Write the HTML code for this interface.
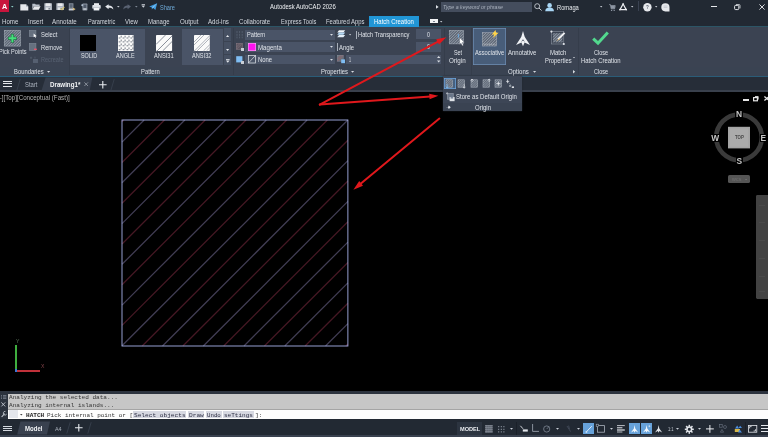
<!DOCTYPE html>
<html lang="en"><head><meta charset="utf-8"><title>Autodesk AutoCAD 2026 - Drawing1</title>
<style>
html,body{margin:0;padding:0;background:#000;}
#wrap{position:relative;width:768px;height:437px;overflow:hidden;background:#000;}
#blur{position:absolute;left:-8px;top:-8px;width:784px;height:453px;filter:blur(0.45px);}
#app{position:absolute;left:8px;top:8px;width:768px;height:437px;font-family:'Liberation Sans',sans-serif;}
#app>div,#app>span,#app>svg{position:absolute;display:block;}
#app>span{white-space:pre;}
#app>svg{overflow:visible;}
</style></head><body><div id="wrap"><div id="blur"><div id="app">
<div style="left:-8.00px;top:-8.00px;width:784.00px;height:453.00px;background:#222933;"></div>
<div style="left:-8.00px;top:26.00px;width:784.00px;height:419.00px;background:#2c5566;"></div>
<div style="left:-8.00px;top:27.00px;width:784.00px;height:418.00px;background:#3b4352;"></div>
<div style="left:-8.00px;top:66.50px;width:784.00px;height:378.50px;background:#3a4352;"></div>
<div style="left:-8.00px;top:75.50px;width:784.00px;height:369.50px;background:#2a5c78;"></div>
<div style="left:-8.00px;top:77.30px;width:784.00px;height:367.70px;background:#262d38;"></div>
<div style="left:-8.00px;top:90.00px;width:784.00px;height:355.00px;background:#39404c;"></div>
<div style="left:-8.00px;top:91.50px;width:784.00px;height:353.50px;background:#000;"></div>
<div style="left:-8.00px;top:391.30px;width:784.00px;height:53.70px;background:#2b323d;"></div>
<div style="left:7.80px;top:393.60px;width:768.20px;height:51.40px;background:#c6c6c6;"></div>
<div style="left:7.80px;top:408.90px;width:768.20px;height:36.10px;background:#a4a4a4;"></div>
<div style="left:7.80px;top:409.70px;width:768.20px;height:35.30px;background:#fdfdfd;"></div>
<div style="left:-8.00px;top:419.30px;width:784.00px;height:25.70px;background:#222933;"></div>
<div style="left:-8.00px;top:435.00px;width:784.00px;height:10.00px;background:#39414f;"></div>
<div style="left:-8.00px;top:-8.00px;width:16.60px;height:19.60px;background:#c8143c;"></div>
<svg style="left:1.60px;top:1px" width="6.20" height="11"><text x="0" y="8" xml:space="preserve" font-family="'Liberation Sans',sans-serif" font-size="8.00" fill="#fff" font-weight="bold" textLength="5.20" lengthAdjust="spacingAndGlyphs">A</text></svg>
<svg style="left:11.00px;top:5.50px" width="2.60" height="1.60" viewBox="0 0 2.60 1.60"><path d="M0 0H2.6L1.3 1.6Z" fill="#8fd0c8"/></svg>
<svg style="left:19.50px;top:3.60px" width="8.60" height="6.80" viewBox="0 0 8.60 6.80"><path d="M0.3 0.3H6L8.3 2.4V6.5H0.3Z" fill="#e6e8ec"/><path d="M6 0.3V2.4H8.3Z" fill="#9aa2ae"/></svg>
<svg style="left:31.50px;top:3.40px" width="8.80" height="7.00" viewBox="0 0 8.80 7.00"><path d="M0.3 0.8H3L3.8 1.6H7.6V3H2L0.3 6.6Z" fill="#b9c0ca"/><path d="M2.2 3.2H8.6L6.8 6.8H0.4Z" fill="#e6e8ec"/></svg>
<svg style="left:44.00px;top:3.40px" width="8.40" height="7.20" viewBox="0 0 8.40 7.20"><path d="M0.3 0.3H8V7H0.3Z" fill="#aab1bc"/><rect x="1.6" y="0.3" width="5" height="2.8" fill="#e9ebee"/><rect x="1.8" y="4.4" width="4.6" height="2.6" fill="#e1e4e8"/><rect x="4.6" y="4.9" width="1.1" height="1.7" fill="#596273"/></svg>
<svg style="left:56.00px;top:3.40px" width="8.40" height="7.20" viewBox="0 0 8.40 7.20"><path d="M0.3 0.3H8V7H0.3Z" fill="#aab1bc"/><rect x="1.6" y="0.3" width="5" height="2.8" fill="#e9ebee"/><rect x="1.8" y="4.4" width="4.6" height="2.6" fill="#e1e4e8"/><rect x="4.6" y="4.9" width="1.1" height="1.7" fill="#596273"/><path d="M4.6 5.4L6 6.8L8.3 3.8" stroke="#d8c46a" stroke-width="1.1" fill="none"/></svg>
<svg style="left:68.00px;top:3.20px" width="8.50" height="7.60" viewBox="0 0 8.50 7.60"><rect x="0.8" y="0.3" width="4.6" height="7" fill="#8b94a1"/><rect x="1.6" y="1.2" width="3" height="3.6" fill="#5a6473"/><path d="M4.4 4.4L7.6 6L5.6 7.4Z" fill="#e2c27a"/><rect x="0.8" y="6.2" width="4.6" height="1.1" fill="#d9dce1"/></svg>
<svg style="left:81.00px;top:3.20px" width="7.50" height="7.60" viewBox="0 0 7.50 7.60"><rect x="1.4" y="0.6" width="5" height="6.8" rx="0.6" fill="#8b94a1"/><rect x="2.4" y="1.6" width="3" height="3.4" fill="#4e5868"/><path d="M0.2 2.2H2.2M1.2 1.2V3.2" stroke="#cfe0f4" stroke-width="0.7"/><rect x="2.4" y="5.6" width="3" height="1" fill="#d9dce1"/></svg>
<svg style="left:92.00px;top:3.20px" width="9.00" height="7.60" viewBox="0 0 9.00 7.60"><rect x="2" y="0.2" width="5" height="2.2" fill="#e9ebee"/><rect x="0.3" y="2" width="8.4" height="3.8" rx="0.8" fill="#dfe2e7"/><rect x="1.8" y="4.4" width="5.4" height="3" fill="#f4f5f7" stroke="#8b94a1" stroke-width="0.4"/></svg>
<svg style="left:104.50px;top:3.60px" width="8.70" height="6.00" viewBox="0 0 8.70 6.00"><path d="M0.2 2.6L3.6 0.2V1.6C6.4 1.6 8.2 3 8.4 5.6C7.2 4.2 5.8 3.8 3.6 3.8V5.2Z" fill="#e4e7ec"/></svg>
<svg style="left:116.50px;top:5.85px" width="2.60" height="1.50" viewBox="0 0 2.60 1.50"><path d="M0 0H2.6L1.3 1.5Z" fill="#c9ced6"/></svg>
<svg style="left:123.00px;top:3.60px" width="8.00" height="6.00" viewBox="0 0 8.00 6.00"><path d="M8 2.6L4.6 0.2V1.6C2 1.6 0.4 3 0.2 5.6C1.2 4.2 2.6 3.8 4.6 3.8V5.2Z" fill="#596272"/></svg>
<svg style="left:134.50px;top:5.85px" width="2.60" height="1.50" viewBox="0 0 2.60 1.50"><path d="M0 0H2.6L1.3 1.5Z" fill="#7f8896"/></svg>
<svg style="left:141.00px;top:4.40px" width="4.60" height="4.20" viewBox="0 0 4.60 4.20"><rect x="0.6" y="0" width="3.4" height="0.8" fill="#c9ced6"/><path d="M0.4 1.6H4.2L2.3 3.8Z" fill="#c9ced6"/></svg>
<svg style="left:149.00px;top:3.20px" width="8.40" height="7.20" viewBox="0 0 8.40 7.20"><path d="M0.2 3.4L8.2 0.2L6.4 7L4.2 5L2.8 6.6V4.4Z" fill="#3f9be0"/><path d="M2.8 4.4L8.2 0.2L4.2 5" fill="#8cc6f2"/></svg>
<svg style="left:159.80px;top:2px" width="16.00" height="11"><text x="0" y="8" xml:space="preserve" font-family="'Liberation Sans',sans-serif" font-size="6.60" fill="#6eaad8" textLength="15.00" lengthAdjust="spacingAndGlyphs">Share</text></svg>
<svg style="left:270.10px;top:1px" width="66.70" height="11"><text x="0" y="8" xml:space="preserve" font-family="'Liberation Sans',sans-serif" font-size="6.60" fill="#eef0f3" textLength="65.70" lengthAdjust="spacingAndGlyphs">Autodesk AutoCAD 2026</text></svg>
<svg style="left:435.80px;top:5.20px" width="2.80" height="3.80" viewBox="0 0 2.80 3.80"><path d="M0 0L2.6 1.9L0 3.8Z" fill="#dfe3e8"/></svg>
<div style="left:441.30px;top:2.20px;width:90.70px;height:10.30px;background:#444d5d;"></div>
<svg style="left:443.00px;top:1px" width="61.00" height="11"><text x="0" y="8" xml:space="preserve" font-family="'Liberation Sans',sans-serif" font-size="5.80" fill="#aab2be" font-style="italic" textLength="60.00" lengthAdjust="spacingAndGlyphs">Type a keyword or phrase</text></svg>
<svg style="left:533.50px;top:3.20px" width="8.10" height="8.00" viewBox="0 0 8.10 8.00"><circle cx="3.2" cy="3.2" r="2.5" fill="none" stroke="#c3c8d0" stroke-width="0.9"/><path d="M5 5L7.6 7.6" stroke="#c3c8d0" stroke-width="1"/></svg>
<svg style="left:545.40px;top:2.80px" width="9.20" height="8.40" viewBox="0 0 9.20 8.40"><circle cx="4.6" cy="2.4" r="2.3" fill="#a9d6f5"/><path d="M0.2 8.2C0.4 5.4 2.4 4.6 4.6 4.6S8.8 5.4 9 8.2Z" fill="#a9d6f5"/></svg>
<svg style="left:557.00px;top:2px" width="22.80" height="11"><text x="0" y="8" xml:space="preserve" font-family="'Liberation Sans',sans-serif" font-size="6.40" fill="#e8ebef" textLength="21.80" lengthAdjust="spacingAndGlyphs">Romaga</text></svg>
<svg style="left:600.00px;top:6.25px" width="2.40" height="1.50" viewBox="0 0 2.40 1.50"><path d="M0 0H2.4L1.2 1.5Z" fill="#c9ced6"/></svg>
<svg style="left:608.60px;top:3.60px" width="6.40" height="7.60" viewBox="0 0 6.40 7.60"><path d="M0.2 0.6H1.4L2.2 4.8H5.6L6.2 1.6H1.8" fill="none" stroke="#8e97a4" stroke-width="0.9"/><rect x="2" y="2" width="3.8" height="2.6" fill="#8e97a4"/><circle cx="2.6" cy="6.4" r="0.7" fill="#8e97a4"/><circle cx="5.2" cy="6.4" r="0.7" fill="#8e97a4"/></svg>
<svg style="left:619.30px;top:3.20px" width="8.20" height="7.60" viewBox="0 0 8.20 7.60"><path d="M4.1 1L7.2 6.6H1Z" fill="none" stroke="#eef0f3" stroke-width="1.2"/><circle cx="4.1" cy="1" r="0.8" fill="#eef0f3"/><circle cx="1" cy="6.6" r="0.8" fill="#eef0f3"/><circle cx="7.2" cy="6.6" r="0.8" fill="#eef0f3"/></svg>
<svg style="left:630.60px;top:6.25px" width="2.40" height="1.50" viewBox="0 0 2.40 1.50"><path d="M0 0H2.4L1.2 1.5Z" fill="#c9ced6"/></svg>
<div style="left:638.00px;top:1.00px;width:0.60px;height:10.40px;background:#3a4251;"></div>
<svg style="left:642.80px;top:3.00px" width="8.80" height="8.60" viewBox="0 0 8.80 8.60"><circle cx="4.4" cy="4.3" r="4.2" fill="#e6e8ec"/></svg>
<svg style="left:645.90px;top:1px" width="3.80" height="11"><text x="0" y="8" xml:space="preserve" font-family="'Liberation Sans',sans-serif" font-size="6.00" fill="#59616e" font-weight="bold" textLength="2.80" lengthAdjust="spacingAndGlyphs">?</text></svg>
<svg style="left:655.20px;top:6.25px" width="2.40" height="1.50" viewBox="0 0 2.40 1.50"><path d="M0 0H2.4L1.2 1.5Z" fill="#c9ced6"/></svg>
<svg style="left:661.20px;top:3.00px" width="8.60" height="8.80" viewBox="0 0 8.60 8.80"><path d="M4.4 0.2A4.1 4.1 0 0 1 8.5 4.3V8.4H4.4A4.1 4.1 0 0 1 4.4 0.2Z" fill="#e6e8ec"/><path d="M2.6 4.4H6.4M2.6 3H6.4" stroke="#a8afba" stroke-width="0.5"/></svg>
<div style="left:711.40px;top:6.10px;width:5.60px;height:0.90px;background:#e6e8ec;"></div>
<svg style="left:734.30px;top:3.60px" width="6.70" height="6.20" viewBox="0 0 6.70 6.20"><rect x="0.6" y="1.4" width="4.2" height="4.2" rx="1" fill="none" stroke="#e6e8ec" stroke-width="1"/><path d="M2 0.6H5.2A0.8 0.8 0 0 1 6 1.4V4.4" fill="none" stroke="#e6e8ec" stroke-width="0.8"/></svg>
<svg style="left:758.50px;top:3.80px" width="6.00" height="6.00" viewBox="0 0 6.00 6.00"><path d="M0.4 0.4L5.6 5.6M5.6 0.4L0.4 5.6" stroke="#e6e8ec" stroke-width="0.9"/></svg>
<svg style="left:1.60px;top:16px" width="17.40" height="11"><text x="0" y="8" xml:space="preserve" font-family="'Liberation Sans',sans-serif" font-size="6.60" fill="#d3d8df" textLength="16.40" lengthAdjust="spacingAndGlyphs">Home</text></svg>
<svg style="left:28.20px;top:16px" width="16.20" height="11"><text x="0" y="8" xml:space="preserve" font-family="'Liberation Sans',sans-serif" font-size="6.60" fill="#d3d8df" textLength="15.20" lengthAdjust="spacingAndGlyphs">Insert</text></svg>
<svg style="left:52.40px;top:16px" width="25.80" height="11"><text x="0" y="8" xml:space="preserve" font-family="'Liberation Sans',sans-serif" font-size="6.60" fill="#d3d8df" textLength="24.80" lengthAdjust="spacingAndGlyphs">Annotate</text></svg>
<svg style="left:88.20px;top:16px" width="28.20" height="11"><text x="0" y="8" xml:space="preserve" font-family="'Liberation Sans',sans-serif" font-size="6.60" fill="#d3d8df" textLength="27.20" lengthAdjust="spacingAndGlyphs">Parametric</text></svg>
<svg style="left:125.40px;top:16px" width="13.80" height="11"><text x="0" y="8" xml:space="preserve" font-family="'Liberation Sans',sans-serif" font-size="6.60" fill="#d3d8df" textLength="12.80" lengthAdjust="spacingAndGlyphs">View</text></svg>
<svg style="left:148.20px;top:16px" width="22.60" height="11"><text x="0" y="8" xml:space="preserve" font-family="'Liberation Sans',sans-serif" font-size="6.60" fill="#d3d8df" textLength="21.60" lengthAdjust="spacingAndGlyphs">Manage</text></svg>
<svg style="left:179.50px;top:16px" width="19.50" height="11"><text x="0" y="8" xml:space="preserve" font-family="'Liberation Sans',sans-serif" font-size="6.60" fill="#d3d8df" textLength="18.50" lengthAdjust="spacingAndGlyphs">Output</text></svg>
<svg style="left:208.20px;top:16px" width="21.90" height="11"><text x="0" y="8" xml:space="preserve" font-family="'Liberation Sans',sans-serif" font-size="6.60" fill="#d3d8df" textLength="20.90" lengthAdjust="spacingAndGlyphs">Add-ins</text></svg>
<svg style="left:238.90px;top:16px" width="32.20" height="11"><text x="0" y="8" xml:space="preserve" font-family="'Liberation Sans',sans-serif" font-size="6.60" fill="#d3d8df" textLength="31.20" lengthAdjust="spacingAndGlyphs">Collaborate</text></svg>
<svg style="left:280.50px;top:16px" width="36.30" height="11"><text x="0" y="8" xml:space="preserve" font-family="'Liberation Sans',sans-serif" font-size="6.60" fill="#d3d8df" textLength="35.30" lengthAdjust="spacingAndGlyphs">Express Tools</text></svg>
<svg style="left:325.50px;top:16px" width="39.50" height="11"><text x="0" y="8" xml:space="preserve" font-family="'Liberation Sans',sans-serif" font-size="6.60" fill="#d3d8df" textLength="38.50" lengthAdjust="spacingAndGlyphs">Featured Apps</text></svg>
<div style="left:369.30px;top:16.00px;width:49.50px;height:11.00px;background:#2196d6;"></div>
<svg style="left:374.20px;top:16px" width="40.80" height="11"><text x="0" y="8" xml:space="preserve" font-family="'Liberation Sans',sans-serif" font-size="6.60" fill="#fff" textLength="39.80" lengthAdjust="spacingAndGlyphs">Hatch Creation</text></svg>
<div style="left:429.60px;top:19.40px;width:8.40px;height:4.10px;background:#f2f3f5;"></div>
<div style="left:433.00px;top:21.00px;width:2.00px;height:0.80px;background:#7a8290;"></div>
<svg style="left:440.00px;top:20.85px" width="2.40" height="1.50" viewBox="0 0 2.40 1.50"><path d="M0 0H2.4L1.2 1.5Z" fill="#c9ced6"/></svg>
<svg style="left:4.30px;top:29.90px" width="16.80" height="16.40" viewBox="0 0 16.80 16.40"><rect x="0.3" y="0.3" width="16.2" height="15.8" fill="#5f6876"/><path d="M0.30 1.65L1.65 0.30" stroke="#a4acb8" stroke-width="0.75"/><path d="M0.30 4.35L4.35 0.30" stroke="#a4acb8" stroke-width="0.75"/><path d="M0.30 7.05L7.05 0.30" stroke="#a4acb8" stroke-width="0.75"/><path d="M0.30 9.75L9.75 0.30" stroke="#a4acb8" stroke-width="0.75"/><path d="M0.30 12.45L12.45 0.30" stroke="#a4acb8" stroke-width="0.75"/><path d="M0.30 15.15L15.15 0.30" stroke="#a4acb8" stroke-width="0.75"/><path d="M2.05 16.10L16.50 1.65" stroke="#a4acb8" stroke-width="0.75"/><path d="M4.75 16.10L16.50 4.35" stroke="#a4acb8" stroke-width="0.75"/><path d="M7.45 16.10L16.50 7.05" stroke="#a4acb8" stroke-width="0.75"/><path d="M10.15 16.10L16.50 9.75" stroke="#a4acb8" stroke-width="0.75"/><path d="M12.85 16.10L16.50 12.45" stroke="#a4acb8" stroke-width="0.75"/><path d="M15.55 16.10L16.50 15.15" stroke="#a4acb8" stroke-width="0.75"/><rect x="0.3" y="0.3" width="16.2" height="15.8" fill="none" stroke="#aab1bc" stroke-width="0.5"/><path d="M8.4 3.8V12.8M4 8.3H12.8" stroke="#236b43" stroke-width="3.2"/><path d="M8.4 4.4V12.2M4.6 8.3H12.2" stroke="#45e07c" stroke-width="1.9"/></svg>
<svg style="left:-1.20px;top:46px" width="28.60" height="11"><text x="0" y="8" xml:space="preserve" font-family="'Liberation Sans',sans-serif" font-size="6.60" fill="#dfe3e9" textLength="27.60" lengthAdjust="spacingAndGlyphs">Pick Points</text></svg>
<svg style="left:29.20px;top:30.30px" width="8.20" height="7.70" viewBox="0 0 8.20 7.70"><rect x="0.2" y="0.2" width="6.8" height="6.6" fill="#66707f" stroke="#8a93a0" stroke-width="0.4"/><path d="M4.6 3.4L7.8 6.2L6.4 6.3L7 7.6L6.3 7.7L5.7 6.5L4.7 7.3Z" fill="#fff"/></svg>
<svg style="left:40.90px;top:29px" width="17.30" height="11"><text x="0" y="8" xml:space="preserve" font-family="'Liberation Sans',sans-serif" font-size="6.60" fill="#dfe3e9" textLength="16.30" lengthAdjust="spacingAndGlyphs">Select</text></svg>
<svg style="left:29.20px;top:42.60px" width="8.20" height="8.40" viewBox="0 0 8.20 8.40"><rect x="0.2" y="0.2" width="6.8" height="7.4" fill="#66707f" stroke="#8a93a0" stroke-width="0.4"/><rect x="5" y="5.6" width="2.8" height="1.4" fill="#e8556a"/></svg>
<svg style="left:40.90px;top:42px" width="22.40" height="11"><text x="0" y="8" xml:space="preserve" font-family="'Liberation Sans',sans-serif" font-size="6.60" fill="#dfe3e9" textLength="21.40" lengthAdjust="spacingAndGlyphs">Remove</text></svg>
<svg style="left:29.50px;top:56.40px" width="8.50" height="7.20" viewBox="0 0 8.50 7.20"><rect x="3" y="3" width="5" height="4" fill="#566071"/><path d="M1 0.6V3M0 1.8H2.2M5 0.6V2.6" stroke="#566071" stroke-width="0.7"/></svg>
<svg style="left:40.90px;top:54px" width="23.60" height="11"><text x="0" y="8" xml:space="preserve" font-family="'Liberation Sans',sans-serif" font-size="6.40" fill="#586272" textLength="22.60" lengthAdjust="spacingAndGlyphs">Recreate</text></svg>
<svg style="left:13.80px;top:66px" width="30.60" height="11"><text x="0" y="8" xml:space="preserve" font-family="'Liberation Sans',sans-serif" font-size="6.60" fill="#dfe3e9" textLength="29.60" lengthAdjust="spacingAndGlyphs">Boundaries</text></svg>
<svg style="left:47.30px;top:71.30px" width="3.20" height="1.80" viewBox="0 0 3.20 1.80"><path d="M0 0H3.2L1.6 1.8Z" fill="#d8dce2"/></svg>
<div style="left:68.60px;top:28.00px;width:0.80px;height:47.00px;background:#353d4b;"></div>
<div style="left:70.40px;top:28.80px;width:74.60px;height:36.20px;background:#4a5467;"></div>
<div style="left:181.50px;top:28.80px;width:41.30px;height:36.20px;background:#4a5467;"></div>
<div style="left:80.10px;top:34.80px;width:16.30px;height:16.00px;background:#000;"></div>
<svg style="left:80.50px;top:50px" width="17.30" height="11"><text x="0" y="8" xml:space="preserve" font-family="'Liberation Sans',sans-serif" font-size="6.60" fill="#dfe3e9" textLength="16.30" lengthAdjust="spacingAndGlyphs">SOLID</text></svg>
<svg style="left:117.80px;top:34.80px" width="15.60" height="16.00" viewBox="0 0 15.60 16.00"><rect width="15.6" height="16" fill="#fafafa"/><path d="M0.70 3.00H2.50M3.20 0.70V2.50" stroke="#4a5260" stroke-width="0.75" fill="none"/><path d="M0.70 6.90H2.50M3.20 4.60V6.40" stroke="#4a5260" stroke-width="0.75" fill="none"/><path d="M0.70 10.80H2.50M3.20 8.50V10.30" stroke="#4a5260" stroke-width="0.75" fill="none"/><path d="M0.70 14.70H2.50M3.20 12.40V14.20" stroke="#4a5260" stroke-width="0.75" fill="none"/><path d="M4.60 3.00H6.40M7.10 0.70V2.50" stroke="#4a5260" stroke-width="0.75" fill="none"/><path d="M4.60 6.90H6.40M7.10 4.60V6.40" stroke="#4a5260" stroke-width="0.75" fill="none"/><path d="M4.60 10.80H6.40M7.10 8.50V10.30" stroke="#4a5260" stroke-width="0.75" fill="none"/><path d="M4.60 14.70H6.40M7.10 12.40V14.20" stroke="#4a5260" stroke-width="0.75" fill="none"/><path d="M8.50 3.00H10.30M11.00 0.70V2.50" stroke="#4a5260" stroke-width="0.75" fill="none"/><path d="M8.50 6.90H10.30M11.00 4.60V6.40" stroke="#4a5260" stroke-width="0.75" fill="none"/><path d="M8.50 10.80H10.30M11.00 8.50V10.30" stroke="#4a5260" stroke-width="0.75" fill="none"/><path d="M8.50 14.70H10.30M11.00 12.40V14.20" stroke="#4a5260" stroke-width="0.75" fill="none"/><path d="M12.40 3.00H14.20M14.90 0.70V2.50" stroke="#4a5260" stroke-width="0.75" fill="none"/><path d="M12.40 6.90H14.20M14.90 4.60V6.40" stroke="#4a5260" stroke-width="0.75" fill="none"/><path d="M12.40 10.80H14.20M14.90 8.50V10.30" stroke="#4a5260" stroke-width="0.75" fill="none"/><path d="M12.40 14.70H14.20M14.90 12.40V14.20" stroke="#4a5260" stroke-width="0.75" fill="none"/></svg>
<svg style="left:116.30px;top:50px" width="19.70" height="11"><text x="0" y="8" xml:space="preserve" font-family="'Liberation Sans',sans-serif" font-size="6.60" fill="#dfe3e9" textLength="18.70" lengthAdjust="spacingAndGlyphs">ANGLE</text></svg>
<svg style="left:155.70px;top:34.80px" width="16.10" height="16.00" viewBox="0 0 16.10 16.00"><rect width="16.1" height="16" rx="0.8" fill="#fafafa"/><path d="M0 9.5L9.5 0M0 17L16.1 0.9M6.6 16L16.1 6.5" stroke="#6d7583" stroke-width="0.8"/></svg>
<svg style="left:153.60px;top:50px" width="20.70" height="11"><text x="0" y="8" xml:space="preserve" font-family="'Liberation Sans',sans-serif" font-size="6.60" fill="#dfe3e9" textLength="19.70" lengthAdjust="spacingAndGlyphs">ANSI31</text></svg>
<svg style="left:193.50px;top:34.80px" width="15.80" height="16.00" viewBox="0 0 15.80 16.00"><rect width="15.8" height="16" rx="0.8" fill="#fafafa"/><path d="M0 7L7 0M0 10L10 0M0 16.4L15.8 0.6M3 16L15.8 3.2M9.4 16L15.8 9.6M12.4 16L15.8 12.6" stroke="#9aa0aa" stroke-width="0.8"/></svg>
<svg style="left:191.60px;top:50px" width="20.40" height="11"><text x="0" y="8" xml:space="preserve" font-family="'Liberation Sans',sans-serif" font-size="6.60" fill="#dfe3e9" textLength="19.40" lengthAdjust="spacingAndGlyphs">ANSI32</text></svg>
<div style="left:224.00px;top:28.40px;width:6.80px;height:12.60px;background:#465062;"></div>
<div style="left:224.00px;top:42.00px;width:6.80px;height:12.00px;background:#465062;"></div>
<div style="left:224.00px;top:55.00px;width:6.80px;height:9.60px;background:#465062;"></div>
<svg style="left:225.80px;top:35.00px" width="3.20" height="2.00" viewBox="0 0 3.20 2.00"><path d="M0 2H3.2L1.6 0Z" fill="#e4e7ec"/></svg>
<svg style="left:225.80px;top:49.00px" width="3.20" height="2.00" viewBox="0 0 3.20 2.00"><path d="M0 0H3.2L1.6 2Z" fill="#e4e7ec"/></svg>
<svg style="left:225.60px;top:59.40px" width="3.60" height="4.00" viewBox="0 0 3.60 4.00"><rect width="3.6" height="0.8" fill="#e4e7ec"/><path d="M0 1.6H3.6L1.8 3.8Z" fill="#e4e7ec"/></svg>
<svg style="left:141.20px;top:66px" width="19.80" height="11"><text x="0" y="8" xml:space="preserve" font-family="'Liberation Sans',sans-serif" font-size="6.60" fill="#dfe3e9" textLength="18.80" lengthAdjust="spacingAndGlyphs">Pattern</text></svg>
<div style="left:232.60px;top:28.00px;width:0.80px;height:47.00px;background:#353d4b;"></div>
<svg style="left:235.50px;top:30.70px" width="7.50" height="7.30" viewBox="0 0 7.50 7.30"><path d="M1 0V7.3M3.6 0V7.3M6.2 0V7.3" stroke="#596373" stroke-width="0.8" stroke-dasharray="2 0.8"/></svg>
<svg style="left:235.50px;top:42.60px" width="8.10" height="8.40" viewBox="0 0 8.10 8.40"><rect x="0.3" y="0.3" width="6" height="6" fill="#5d5560" stroke="#8c7d86" stroke-width="0.5"/><path d="M0.5 4L4 0.5M0.5 6.2L6.2 0.5" stroke="#8c7d86" stroke-width="0.5"/><rect x="5" y="5" width="3" height="3" fill="#c9ced6"/></svg>
<svg style="left:235.50px;top:55.60px" width="8.10" height="8.20" viewBox="0 0 8.10 8.20"><rect x="0.2" y="0.2" width="6.2" height="6.2" fill="#7fbdf3"/><rect x="5" y="5" width="3" height="3" fill="#c9ced6"/></svg>
<div style="left:245.40px;top:29.80px;width:89.50px;height:10.00px;background:#4a5467;"></div>
<svg style="left:330.10px;top:34.10px" width="3.00" height="1.80" viewBox="0 0 3.00 1.80"><path d="M0 0H3L1.5 1.8Z" fill="#d8dce2"/></svg>
<div style="left:245.40px;top:42.00px;width:89.50px;height:10.00px;background:#4a5467;"></div>
<svg style="left:330.10px;top:46.30px" width="3.00" height="1.80" viewBox="0 0 3.00 1.80"><path d="M0 0H3L1.5 1.8Z" fill="#d8dce2"/></svg>
<div style="left:245.40px;top:54.60px;width:89.50px;height:9.80px;background:#4a5467;"></div>
<svg style="left:330.10px;top:58.80px" width="3.00" height="1.80" viewBox="0 0 3.00 1.80"><path d="M0 0H3L1.5 1.8Z" fill="#d8dce2"/></svg>
<svg style="left:246.90px;top:29px" width="19.20" height="11"><text x="0" y="8" xml:space="preserve" font-family="'Liberation Sans',sans-serif" font-size="6.60" fill="#dfe3e9" textLength="18.20" lengthAdjust="spacingAndGlyphs">Pattern</text></svg>
<div style="left:248.10px;top:42.90px;width:7.90px;height:8.30px;background:#ff12f0;box-shadow:inset 0 0 0 0.5px #f3c6ee;"></div>
<svg style="left:258.20px;top:42px" width="24.90" height="11"><text x="0" y="8" xml:space="preserve" font-family="'Liberation Sans',sans-serif" font-size="6.60" fill="#dfe3e9" textLength="23.90" lengthAdjust="spacingAndGlyphs">Magenta</text></svg>
<svg style="left:248.10px;top:55.20px" width="8.00" height="8.40" viewBox="0 0 8.00 8.40"><rect x="0.4" y="0.4" width="7.2" height="7.6" fill="none" stroke="#e4e7ec" stroke-width="0.7"/><path d="M0.6 7.8L7.4 0.6" stroke="#e4e7ec" stroke-width="0.7"/></svg>
<svg style="left:258.20px;top:54px" width="15.10" height="11"><text x="0" y="8" xml:space="preserve" font-family="'Liberation Sans',sans-serif" font-size="6.60" fill="#dfe3e9" textLength="14.10" lengthAdjust="spacingAndGlyphs">None</text></svg>
<svg style="left:337.40px;top:30.20px" width="8.40" height="7.60" viewBox="0 0 8.40 7.60"><path d="M2 0.2H8.2L6.4 2.4H0.2Z" fill="#f2f6fb"/><path d="M2 2.6H8.2L6.4 4.8H0.2Z" fill="#b7dbf7"/><path d="M2 5H8.2L6.4 7.2H0.2Z" fill="#e3eef8"/></svg>
<svg style="left:348.70px;top:33.90px" width="2.20" height="1.40" viewBox="0 0 2.20 1.40"><path d="M0 0H2.2L1.1 1.4Z" fill="#c9ced6"/></svg>
<div style="left:355.50px;top:30.60px;width:0.80px;height:8.40px;background:#a8afba;"></div>
<svg style="left:357.50px;top:29px" width="52.50" height="11"><text x="0" y="8" xml:space="preserve" font-family="'Liberation Sans',sans-serif" font-size="6.60" fill="#dfe3e9" textLength="51.50" lengthAdjust="spacingAndGlyphs">Hatch Transparency</text></svg>
<div style="left:416.40px;top:29.40px;width:25.10px;height:9.80px;background:#4a5467;"></div>
<svg style="left:427.30px;top:29px" width="4.00" height="11"><text x="0" y="8" xml:space="preserve" font-family="'Liberation Sans',sans-serif" font-size="6.40" fill="#dfe3e9" textLength="3.00" lengthAdjust="spacingAndGlyphs">0</text></svg>
<div style="left:337.30px;top:42.80px;width:0.80px;height:8.60px;background:#a8afba;"></div>
<svg style="left:339.30px;top:42px" width="16.10" height="11"><text x="0" y="8" xml:space="preserve" font-family="'Liberation Sans',sans-serif" font-size="6.60" fill="#dfe3e9" textLength="15.10" lengthAdjust="spacingAndGlyphs">Angle</text></svg>
<div style="left:416.40px;top:42.00px;width:25.10px;height:9.80px;background:#4a5467;"></div>
<svg style="left:427.30px;top:41px" width="4.00" height="11"><text x="0" y="8" xml:space="preserve" font-family="'Liberation Sans',sans-serif" font-size="6.40" fill="#dfe3e9" textLength="3.00" lengthAdjust="spacingAndGlyphs">0</text></svg>
<svg style="left:337.40px;top:55.20px" width="8.40" height="8.40" viewBox="0 0 8.40 8.40"><rect x="0.2" y="0.2" width="6" height="6" fill="#6b6f78" stroke="#8f98a5" stroke-width="0.4"/><path d="M0.4 4L4 0.4M0.4 6.2L6.2 0.4" stroke="#b35a62" stroke-width="0.5"/><rect x="4.2" y="4.4" width="3.8" height="3.8" fill="#7fbdf3"/></svg>
<div style="left:346.40px;top:54.60px;width:95.10px;height:9.80px;background:#4a5467;"></div>
<svg style="left:349.00px;top:54px" width="3.00" height="11"><text x="0" y="8" xml:space="preserve" font-family="'Liberation Sans',sans-serif" font-size="6.40" fill="#dfe3e9" textLength="2.00" lengthAdjust="spacingAndGlyphs">1</text></svg>
<svg style="left:436.60px;top:56.40px" width="3.40" height="6.40" viewBox="0 0 3.40 6.40"><path d="M0 2H3.4L1.7 0Z" fill="#d8dce2"/><path d="M0 4.4H3.4L1.7 6.4Z" fill="#d8dce2"/></svg>
<svg style="left:321.00px;top:66px" width="28.00" height="11"><text x="0" y="8" xml:space="preserve" font-family="'Liberation Sans',sans-serif" font-size="6.60" fill="#dfe3e9" textLength="27.00" lengthAdjust="spacingAndGlyphs">Properties</text></svg>
<svg style="left:351.40px;top:71.30px" width="3.20" height="1.80" viewBox="0 0 3.20 1.80"><path d="M0 0H3.2L1.6 1.8Z" fill="#d8dce2"/></svg>
<div style="left:443.60px;top:28.00px;width:0.80px;height:47.00px;background:#353d4b;"></div>
<svg style="left:449.30px;top:30.00px" width="16.30" height="17.00" viewBox="0 0 16.30 17.00"><rect x="0.3" y="0.3" width="14.2" height="13.6" fill="#5f6876"/><path d="M0.30 1.65L1.65 0.30" stroke="#a4acb8" stroke-width="0.75"/><path d="M0.30 4.35L4.35 0.30" stroke="#a4acb8" stroke-width="0.75"/><path d="M0.30 7.05L7.05 0.30" stroke="#a4acb8" stroke-width="0.75"/><path d="M0.30 9.75L9.75 0.30" stroke="#a4acb8" stroke-width="0.75"/><path d="M0.30 12.45L12.45 0.30" stroke="#a4acb8" stroke-width="0.75"/><path d="M1.55 13.90L14.50 0.95" stroke="#a4acb8" stroke-width="0.75"/><path d="M4.25 13.90L14.50 3.65" stroke="#a4acb8" stroke-width="0.75"/><path d="M6.95 13.90L14.50 6.35" stroke="#a4acb8" stroke-width="0.75"/><path d="M9.65 13.90L14.50 9.05" stroke="#a4acb8" stroke-width="0.75"/><path d="M12.35 13.90L14.50 11.75" stroke="#a4acb8" stroke-width="0.75"/><rect x="0.3" y="0.3" width="14.2" height="13.6" fill="none" stroke="#aab1bc" stroke-width="0.5"/><path d="M9.4 4.2V7.6" stroke="#6fb4ef" stroke-width="0.9"/><path d="M10.6 7.4L15.4 12.4L13.2 12.5L14.4 15.2L13.2 15.7L12 13L10.6 14.4Z" fill="#fff" stroke="#3c4555" stroke-width="0.3"/></svg>
<svg style="left:453.50px;top:47px" width="9.10" height="11"><text x="0" y="8" xml:space="preserve" font-family="'Liberation Sans',sans-serif" font-size="6.60" fill="#dfe3e9" textLength="8.10" lengthAdjust="spacingAndGlyphs">Set</text></svg>
<svg style="left:449.30px;top:55px" width="17.70" height="11"><text x="0" y="8" xml:space="preserve" font-family="'Liberation Sans',sans-serif" font-size="6.60" fill="#dfe3e9" textLength="16.70" lengthAdjust="spacingAndGlyphs">Origin</text></svg>
<div style="left:471.30px;top:28.00px;width:0.70px;height:47.00px;background:#353d4b;"></div>
<div style="left:473.10px;top:27.80px;width:33.20px;height:36.80px;background:#485d79;box-shadow:inset 0 0 0 0.7px #6d8db3;"></div>
<svg style="left:481.60px;top:29.60px" width="17.40" height="16.80" viewBox="0 0 17.40 16.80"><rect x="0.3" y="2.6" width="14.4" height="13.4" fill="#5f6876"/><path d="M0.30 3.95L1.65 2.60" stroke="#a4acb8" stroke-width="0.75"/><path d="M0.30 6.65L4.35 2.60" stroke="#a4acb8" stroke-width="0.75"/><path d="M0.30 9.35L7.05 2.60" stroke="#a4acb8" stroke-width="0.75"/><path d="M0.30 12.05L9.75 2.60" stroke="#a4acb8" stroke-width="0.75"/><path d="M0.30 14.75L12.45 2.60" stroke="#a4acb8" stroke-width="0.75"/><path d="M1.75 16.00L14.70 3.05" stroke="#a4acb8" stroke-width="0.75"/><path d="M4.45 16.00L14.70 5.75" stroke="#a4acb8" stroke-width="0.75"/><path d="M7.15 16.00L14.70 8.45" stroke="#a4acb8" stroke-width="0.75"/><path d="M9.85 16.00L14.70 11.15" stroke="#a4acb8" stroke-width="0.75"/><path d="M12.55 16.00L14.70 13.85" stroke="#a4acb8" stroke-width="0.75"/><rect x="0.3" y="2.6" width="14.4" height="13.4" fill="none" stroke="#aab1bc" stroke-width="0.5"/><path d="M1.6 14.2H13.4" stroke="#d3d8df" stroke-width="0.7" stroke-dasharray="1.2 0.6"/><path d="M13.6 0L9.8 4.6H12.2L11 8L16.6 2.8H14Z" fill="#ffd44a"/></svg>
<svg style="left:475.00px;top:47px" width="30.20" height="11"><text x="0" y="8" xml:space="preserve" font-family="'Liberation Sans',sans-serif" font-size="6.60" fill="#dfe3e9" textLength="29.20" lengthAdjust="spacingAndGlyphs">Associative</text></svg>
<svg style="left:515.50px;top:30.60px" width="14.10" height="15.40" viewBox="0 0 14.10 15.40"><path d="M7 0L8.6 5.6L9.6 7.2L14 14L8.6 11.4L7 15.2L5.4 11.4L0 14L4.4 7.2L5.4 5.6Z" fill="#f0f2f5"/><path d="M7 9.4L9 11L7 8.2L5 11Z" fill="#3c4555"/></svg>
<svg style="left:508.40px;top:47px" width="29.30" height="11"><text x="0" y="8" xml:space="preserve" font-family="'Liberation Sans',sans-serif" font-size="6.60" fill="#dfe3e9" textLength="28.30" lengthAdjust="spacingAndGlyphs">Annotative</text></svg>
<svg style="left:550.00px;top:30.20px" width="17.00" height="16.20" viewBox="0 0 17.00 16.20"><rect x="1.4" y="1.6" width="12.4" height="12.4" fill="none" stroke="#9aa2ae" stroke-width="0.5"/><rect x="3" y="3.2" width="9.4" height="9.2" fill="#5f6876"/><path d="M3.00 4.55L4.35 3.20" stroke="#a4acb8" stroke-width="0.75"/><path d="M3.00 7.25L7.05 3.20" stroke="#a4acb8" stroke-width="0.75"/><path d="M3.00 9.95L9.75 3.20" stroke="#a4acb8" stroke-width="0.75"/><path d="M3.25 12.40L12.40 3.25" stroke="#a4acb8" stroke-width="0.75"/><path d="M5.95 12.40L12.40 5.95" stroke="#a4acb8" stroke-width="0.75"/><path d="M8.65 12.40L12.40 8.65" stroke="#a4acb8" stroke-width="0.75"/><path d="M11.35 12.40L12.40 11.35" stroke="#a4acb8" stroke-width="0.75"/><circle cx="1.4" cy="1.6" r="1.1" fill="#e4e7ec"/><circle cx="13.8" cy="14" r="1.1" fill="#e4e7ec"/><path d="M8 9.4L14.6 2.8" stroke="#f4f5f7" stroke-width="1.8"/><path d="M6 11.6L9.4 8.2L10.2 9Z" fill="#e2b86a"/></svg>
<svg style="left:550.00px;top:47px" width="17.40" height="11"><text x="0" y="8" xml:space="preserve" font-family="'Liberation Sans',sans-serif" font-size="6.60" fill="#dfe3e9" textLength="16.40" lengthAdjust="spacingAndGlyphs">Match</text></svg>
<svg style="left:544.80px;top:55px" width="27.60" height="11"><text x="0" y="8" xml:space="preserve" font-family="'Liberation Sans',sans-serif" font-size="6.60" fill="#dfe3e9" textLength="26.60" lengthAdjust="spacingAndGlyphs">Properties</text></svg>
<svg style="left:573.00px;top:56.55px" width="2.00" height="1.30" viewBox="0 0 2.00 1.30"><path d="M0 0H2L1.0 1.3Z" fill="#d8dce2"/></svg>
<svg style="left:507.70px;top:66px" width="21.80" height="11"><text x="0" y="8" xml:space="preserve" font-family="'Liberation Sans',sans-serif" font-size="6.60" fill="#dfe3e9" textLength="20.80" lengthAdjust="spacingAndGlyphs">Options</text></svg>
<svg style="left:532.70px;top:71.30px" width="3.20" height="1.80" viewBox="0 0 3.20 1.80"><path d="M0 0H3.2L1.6 1.8Z" fill="#d8dce2"/></svg>
<svg style="left:573.40px;top:70.00px" width="2.20" height="3.60" viewBox="0 0 2.20 3.60"><path d="M0 0L2.2 1.8L0 3.6Z" fill="#d8dce2"/></svg>
<div style="left:578.00px;top:28.00px;width:0.80px;height:47.00px;background:#353d4b;"></div>
<svg style="left:592.40px;top:31.00px" width="17.00" height="13.60" viewBox="0 0 17.00 13.60"><path d="M1.2 7.6L6 12.2L15.8 1.6" stroke="#52d98e" stroke-width="3" fill="none"/></svg>
<svg style="left:593.80px;top:47px" width="15.10" height="11"><text x="0" y="8" xml:space="preserve" font-family="'Liberation Sans',sans-serif" font-size="6.60" fill="#dfe3e9" textLength="14.10" lengthAdjust="spacingAndGlyphs">Close</text></svg>
<svg style="left:580.90px;top:55px" width="40.60" height="11"><text x="0" y="8" xml:space="preserve" font-family="'Liberation Sans',sans-serif" font-size="6.60" fill="#dfe3e9" textLength="39.60" lengthAdjust="spacingAndGlyphs">Hatch Creation</text></svg>
<svg style="left:593.80px;top:66px" width="15.10" height="11"><text x="0" y="8" xml:space="preserve" font-family="'Liberation Sans',sans-serif" font-size="6.60" fill="#dfe3e9" textLength="14.10" lengthAdjust="spacingAndGlyphs">Close</text></svg>
<div style="left:3.40px;top:80.95px;width:8.30px;height:0.90px;background:#e4e7ec;"></div>
<div style="left:3.40px;top:83.45px;width:8.30px;height:0.90px;background:#e4e7ec;"></div>
<div style="left:3.40px;top:85.95px;width:8.30px;height:0.90px;background:#e4e7ec;"></div>
<svg style="left:15.00px;top:77.60px" width="7.00" height="13.40" viewBox="0 0 7.00 13.40"><path d="M5.2 1.2L1.8 12.6" stroke="#3a4250" stroke-width="0.8"/></svg>
<svg style="left:24.70px;top:79px" width="13.50" height="11"><text x="0" y="8" xml:space="preserve" font-family="'Liberation Sans',sans-serif" font-size="6.40" fill="#aab1bc" textLength="12.50" lengthAdjust="spacingAndGlyphs">Start</text></svg>
<svg style="left:38.00px;top:77.30px" width="58.00" height="13.70" viewBox="0 0 58.00 13.70"><path d="M7.6 0.6H54.4L51.6 13.7H3.4Z" fill="#363e4c"/></svg>
<svg style="left:49.70px;top:79px" width="31.30" height="11"><text x="0" y="8" xml:space="preserve" font-family="'Liberation Sans',sans-serif" font-size="6.60" fill="#f2f4f6" font-weight="bold" textLength="30.30" lengthAdjust="spacingAndGlyphs">Drawing1*</text></svg>
<svg style="left:84.20px;top:82.20px" width="4.40" height="4.40" viewBox="0 0 4.40 4.40"><path d="M0.4 0.4L4 4M4 0.4L0.4 4" stroke="#aab1bc" stroke-width="0.7"/></svg>
<svg style="left:99.00px;top:80.60px" width="7.60" height="7.60" viewBox="0 0 7.60 7.60"><path d="M3.8 0V7.6M0 3.8H7.6" stroke="#e8ebef" stroke-width="1.1"/></svg>
<svg style="left:109.00px;top:77.60px" width="7.00" height="13.40" viewBox="0 0 7.00 13.40"><path d="M5.2 1.2L1.8 12.6" stroke="#3a4250" stroke-width="0.8"/></svg>
<svg style="left:-2.20px;top:92px" width="72.70" height="11"><text x="0" y="8" xml:space="preserve" font-family="'Liberation Sans',sans-serif" font-size="6.60" fill="#b2b2b2" textLength="71.70" lengthAdjust="spacingAndGlyphs">[-][Top][Conceptual (Fast)]</text></svg>
<div style="left:743.40px;top:98.90px;width:5.60px;height:2.00px;background:#e6e6e6;"></div>
<svg style="left:753.20px;top:95.80px" width="5.80" height="5.20" viewBox="0 0 5.80 5.20"><rect x="0.6" y="1.6" width="3.8" height="3.2" fill="none" stroke="#e6e6e6" stroke-width="1.2"/><path d="M2 0.5H5.2V3.6" fill="none" stroke="#e6e6e6" stroke-width="0.9"/></svg>
<svg style="left:763.60px;top:96.20px" width="6.00" height="4.80" viewBox="0 0 6.00 4.80"><path d="M0.4 0.4L5.2 4.6M5.2 0.4L0.4 4.6" stroke="#e6e6e6" stroke-width="1.3"/></svg>
<svg style="left:121.30px;top:119.30px" width="227.90" height="228.00" viewBox="0 0 227.90 228.00"><g transform="translate(1 1)"><path d="M0.0 1.7L1.7 0.0" stroke="#461824" stroke-width="1.25"/><path d="M0.0 22.1L22.1 0.0" stroke="#423e55" stroke-width="1.25"/><path d="M0.0 42.5L42.5 0.0" stroke="#461824" stroke-width="1.25"/><path d="M0.0 62.8L62.8 0.0" stroke="#423e55" stroke-width="1.25"/><path d="M0.0 83.2L83.2 0.0" stroke="#461824" stroke-width="1.25"/><path d="M0.0 103.6L103.6 0.0" stroke="#423e55" stroke-width="1.25"/><path d="M0.0 124.0L124.0 0.0" stroke="#461824" stroke-width="1.25"/><path d="M0.0 144.3L144.3 0.0" stroke="#423e55" stroke-width="1.25"/><path d="M0.0 164.7L164.7 0.0" stroke="#461824" stroke-width="1.25"/><path d="M0.0 185.1L185.1 0.0" stroke="#423e55" stroke-width="1.25"/><path d="M0.0 205.4L205.4 0.0" stroke="#461824" stroke-width="1.25"/><path d="M0.0 225.8L225.8 0.0" stroke="#423e55" stroke-width="1.25"/><path d="M20.2 226.0L225.9 20.3" stroke="#461824" stroke-width="1.25"/><path d="M40.5 226.0L225.9 40.6" stroke="#423e55" stroke-width="1.25"/><path d="M60.9 226.0L225.9 61.0" stroke="#461824" stroke-width="1.25"/><path d="M81.3 226.0L225.9 81.4" stroke="#423e55" stroke-width="1.25"/><path d="M101.7 226.0L225.9 101.8" stroke="#461824" stroke-width="1.25"/><path d="M122.0 226.0L225.9 122.1" stroke="#423e55" stroke-width="1.25"/><path d="M142.4 226.0L225.9 142.5" stroke="#461824" stroke-width="1.25"/><path d="M162.8 226.0L225.9 162.9" stroke="#423e55" stroke-width="1.25"/><path d="M183.1 226.0L225.9 183.2" stroke="#461824" stroke-width="1.25"/><path d="M203.5 226.0L225.9 203.6" stroke="#423e55" stroke-width="1.25"/><path d="M223.9 226.0L225.9 224.0" stroke="#461824" stroke-width="1.25"/><rect x="0" y="0" width="225.9" height="226.0" fill="none" stroke="#a6b1e8" stroke-width="0.9"/></g></svg>
<div style="left:14.90px;top:345.20px;width:1.80px;height:25.80px;background:#3fae3f;"></div>
<div style="left:15.80px;top:369.90px;width:24.20px;height:1.80px;background:#c0313a;"></div>
<div style="left:14.90px;top:369.40px;width:2.10px;height:2.30px;background:#3a78d8;"></div>
<svg style="left:16.20px;top:335px" width="4.40" height="11"><text x="0" y="8" xml:space="preserve" font-family="'Liberation Sans',sans-serif" font-size="5.40" fill="#5a745a" textLength="3.40" lengthAdjust="spacingAndGlyphs">Y</text></svg>
<svg style="left:40.60px;top:360px" width="4.40" height="11"><text x="0" y="8" xml:space="preserve" font-family="'Liberation Sans',sans-serif" font-size="5.40" fill="#84444a" textLength="3.40" lengthAdjust="spacingAndGlyphs">X</text></svg>
<svg style="left:712.00px;top:108.00px" width="56.00" height="60.00" viewBox="0 0 56.00 60.00"><circle cx="27" cy="29.3" r="22.8" fill="none" stroke="#3a3a3a" stroke-width="4.6"/><rect x="16" y="18.8" width="22" height="21.6" fill="#a4a4a4"/><rect x="17.6" y="20.4" width="18.8" height="18.4" fill="#ababab"/></svg>
<svg style="left:734.60px;top:131px" width="9.80" height="11"><text x="0" y="8" xml:space="preserve" font-family="'Liberation Sans',sans-serif" font-size="4.80" fill="#484848" font-weight="bold" textLength="8.80" lengthAdjust="spacingAndGlyphs">TOP</text></svg>
<span style="left:735.4px;top:109.8px;font:bold 8.4px/8px 'Liberation Sans',sans-serif;color:#c6c6c6;background:#000;padding:0 0.6px">N</span>
<span style="left:735.9px;top:157.2px;font:bold 8.4px/8px 'Liberation Sans',sans-serif;color:#c6c6c6;background:#000;padding:0 0.6px">S</span>
<span style="left:710.8px;top:133.6px;font:bold 8.4px/8px 'Liberation Sans',sans-serif;color:#c6c6c6;background:#000;padding:0 0.4px">W</span>
<span style="left:759.8px;top:133.6px;font:bold 8.4px/8px 'Liberation Sans',sans-serif;color:#c6c6c6;background:#000;padding:0 0.6px">E</span>
<div style="left:727.60px;top:175.00px;width:22.40px;height:8.00px;background:#555;border-radius:1.6px;"></div>
<svg style="left:731.60px;top:173px" width="10.40" height="11"><text x="0" y="8" xml:space="preserve" font-family="'Liberation Sans',sans-serif" font-size="4.20" fill="#777" textLength="9.40" lengthAdjust="spacingAndGlyphs">WCS</text></svg>
<svg style="left:744.90px;top:178.75px" width="2.20" height="1.30" viewBox="0 0 2.20 1.30"><path d="M0 0H2.2L1.1 1.3Z" fill="#777"/></svg>
<div style="left:755.80px;top:194.80px;width:20.20px;height:104.60px;background:#424242;border-radius:1.4px 0 0 1.4px;"></div>
<div style="left:759.40px;top:205.00px;width:5.20px;height:0.80px;background:#4a4a4a;"></div>
<div style="left:759.40px;top:222.00px;width:5.20px;height:0.80px;background:#4a4a4a;"></div>
<div style="left:759.40px;top:240.00px;width:5.20px;height:0.80px;background:#4a4a4a;"></div>
<div style="left:759.40px;top:258.00px;width:5.20px;height:0.80px;background:#4a4a4a;"></div>
<div style="left:759.40px;top:276.00px;width:5.20px;height:0.80px;background:#4a4a4a;"></div>
<div style="left:759.40px;top:291.00px;width:5.20px;height:0.80px;background:#4a4a4a;"></div>
<div style="left:443.30px;top:76.00px;width:78.70px;height:35.40px;background:#3d4656;box-shadow:0 0 1.5px #20262f;"></div>
<div style="left:443.30px;top:103.40px;width:78.70px;height:8.00px;background:#3a4352;"></div>
<div style="left:444.40px;top:77.60px;width:11.40px;height:11.60px;background:#46607f;box-shadow:inset 0 0 0 0.7px #6ea5de;"></div>
<svg style="left:445.40px;top:78.60px" width="9.40" height="10.00" viewBox="0 0 9.40 10.00"><rect x="1" y="0.8" width="6.6" height="7.4" fill="#5f6876"/><path d="M1.00 1.90L2.10 0.80" stroke="#a4acb8" stroke-width="0.6"/><path d="M1.00 4.10L4.30 0.80" stroke="#a4acb8" stroke-width="0.6"/><path d="M1.00 6.30L6.50 0.80" stroke="#a4acb8" stroke-width="0.6"/><path d="M1.30 8.20L7.60 1.90" stroke="#a4acb8" stroke-width="0.6"/><path d="M3.50 8.20L7.60 4.10" stroke="#a4acb8" stroke-width="0.6"/><path d="M5.70 8.20L7.60 6.30" stroke="#a4acb8" stroke-width="0.6"/><rect x="1" y="0.8" width="6.6" height="7.4" fill="none" stroke="#aab1bc" stroke-width="0.5"/><path d="M2.2 5.2V9.2M1 7.8L2.2 9.2L3.4 7.8" stroke="#7fc0f5" stroke-width="0.7" fill="none"/></svg>
<svg style="left:457.40px;top:78.60px" width="9.40" height="10.00" viewBox="0 0 9.40 10.00"><rect x="1" y="0.8" width="6.6" height="7.4" fill="#5f6876"/><path d="M1.00 1.90L2.10 0.80" stroke="#a4acb8" stroke-width="0.6"/><path d="M1.00 4.10L4.30 0.80" stroke="#a4acb8" stroke-width="0.6"/><path d="M1.00 6.30L6.50 0.80" stroke="#a4acb8" stroke-width="0.6"/><path d="M1.30 8.20L7.60 1.90" stroke="#a4acb8" stroke-width="0.6"/><path d="M3.50 8.20L7.60 4.10" stroke="#a4acb8" stroke-width="0.6"/><path d="M5.70 8.20L7.60 6.30" stroke="#a4acb8" stroke-width="0.6"/><rect x="1" y="0.8" width="6.6" height="7.4" fill="none" stroke="#aab1bc" stroke-width="0.5"/><path d="M7.2 5.2V9.2M6 7.8L7.2 9.2L8.4 7.8" stroke="#dfe3e8" stroke-width="0.7" fill="none"/></svg>
<svg style="left:469.60px;top:78.60px" width="9.40" height="10.00" viewBox="0 0 9.40 10.00"><rect x="1" y="0.8" width="6.6" height="7.4" fill="#5f6876"/><path d="M1.00 1.90L2.10 0.80" stroke="#a4acb8" stroke-width="0.6"/><path d="M1.00 4.10L4.30 0.80" stroke="#a4acb8" stroke-width="0.6"/><path d="M1.00 6.30L6.50 0.80" stroke="#a4acb8" stroke-width="0.6"/><path d="M1.30 8.20L7.60 1.90" stroke="#a4acb8" stroke-width="0.6"/><path d="M3.50 8.20L7.60 4.10" stroke="#a4acb8" stroke-width="0.6"/><path d="M5.70 8.20L7.60 6.30" stroke="#a4acb8" stroke-width="0.6"/><rect x="1" y="0.8" width="6.6" height="7.4" fill="none" stroke="#aab1bc" stroke-width="0.5"/><path d="M2 0V3M0.6 1.4L2 0L3.4 1.4" stroke="#dfe3e8" stroke-width="0.7" fill="none"/></svg>
<svg style="left:481.60px;top:78.60px" width="9.40" height="10.00" viewBox="0 0 9.40 10.00"><rect x="1" y="0.8" width="6.6" height="7.4" fill="#5f6876"/><path d="M1.00 1.90L2.10 0.80" stroke="#a4acb8" stroke-width="0.6"/><path d="M1.00 4.10L4.30 0.80" stroke="#a4acb8" stroke-width="0.6"/><path d="M1.00 6.30L6.50 0.80" stroke="#a4acb8" stroke-width="0.6"/><path d="M1.30 8.20L7.60 1.90" stroke="#a4acb8" stroke-width="0.6"/><path d="M3.50 8.20L7.60 4.10" stroke="#a4acb8" stroke-width="0.6"/><path d="M5.70 8.20L7.60 6.30" stroke="#a4acb8" stroke-width="0.6"/><rect x="1" y="0.8" width="6.6" height="7.4" fill="none" stroke="#aab1bc" stroke-width="0.5"/><path d="M7.2 0V3M5.8 1.4L7.2 0L8.6 1.4" stroke="#dfe3e8" stroke-width="0.7" fill="none"/></svg>
<svg style="left:493.60px;top:78.60px" width="9.40" height="10.00" viewBox="0 0 9.40 10.00"><rect x="1" y="0.8" width="6.6" height="7.4" fill="#5f6876"/><path d="M1.00 1.90L2.10 0.80" stroke="#a4acb8" stroke-width="0.6"/><path d="M1.00 4.10L4.30 0.80" stroke="#a4acb8" stroke-width="0.6"/><path d="M1.00 6.30L6.50 0.80" stroke="#a4acb8" stroke-width="0.6"/><path d="M1.30 8.20L7.60 1.90" stroke="#a4acb8" stroke-width="0.6"/><path d="M3.50 8.20L7.60 4.10" stroke="#a4acb8" stroke-width="0.6"/><path d="M5.70 8.20L7.60 6.30" stroke="#a4acb8" stroke-width="0.6"/><rect x="1" y="0.8" width="6.6" height="7.4" fill="none" stroke="#aab1bc" stroke-width="0.5"/><path d="M4.4 2.6V6.6M2.4 4.6H6.4" stroke="#e8ebef" stroke-width="0.8"/></svg>
<svg style="left:506.40px;top:79.00px" width="8.60" height="9.60" viewBox="0 0 8.60 9.60"><path d="M1.6 0.4V4.2M0.2 2.4H3.2M4 6.2V7.6M3.4 7H4.8" stroke="#dfe3e8" stroke-width="0.8"/><rect x="5.8" y="7.4" width="2.2" height="1.6" fill="#dfe3e8"/><path d="M2.6 3.6L5.4 6.6" stroke="#9aa3b0" stroke-width="0.5"/></svg>
<svg style="left:445.80px;top:91.60px" width="8.80" height="9.40" viewBox="0 0 8.80 9.40"><path d="M1.2 0.2V2.6M0 1.4H2.4" stroke="#dfe3e8" stroke-width="0.6"/><rect x="1.6" y="1.6" width="5.6" height="5.6" fill="#6a7688" stroke="#aab1bc" stroke-width="0.5"/><rect x="3.6" y="5" width="5" height="4.2" fill="#dfe3e8"/><rect x="4.6" y="5" width="2.6" height="1.6" fill="#7b8798"/></svg>
<svg style="left:456.30px;top:91px" width="61.90" height="11"><text x="0" y="8" xml:space="preserve" font-family="'Liberation Sans',sans-serif" font-size="6.40" fill="#dfe3e9" textLength="60.90" lengthAdjust="spacingAndGlyphs">Store as Default Origin</text></svg>
<svg style="left:446.20px;top:104.60px" width="5.20" height="4.80" viewBox="0 0 5.20 4.80"><path d="M0.4 2.2H2L2.8 0.4L4.8 2.2L2.8 4L2 2.6H0.4Z" fill="#dfe3e8"/></svg>
<svg style="left:475.30px;top:102px" width="17.00" height="11"><text x="0" y="8" xml:space="preserve" font-family="'Liberation Sans',sans-serif" font-size="6.40" fill="#dfe3e9" textLength="16.00" lengthAdjust="spacingAndGlyphs">Origin</text></svg>
<svg style="left:0;top:0" width="768" height="437" viewBox="0 0 768 437"><path d="M319.8 104.6L438.5 41.4" stroke="#e0181c" stroke-width="2.0" stroke-linecap="round" fill="none"/><path d="M446.4 37.2L439.0 44.5L436.2 39.3Z" fill="#e0181c"/><path d="M319.8 104.6L430.4 96.4" stroke="#e0181c" stroke-width="2.0" stroke-linecap="round" fill="none"/><path d="M438.4 95.8L429.6 99.2L429.2 93.8Z" fill="#e0181c"/><path d="M439.4 118.6L360.3 184.1" stroke="#e0181c" stroke-width="2.0" stroke-linecap="round" fill="none"/><path d="M353.4 189.8L359.2 181.1L363.0 185.7Z" fill="#e0181c"/></svg>
<svg style="left:1.20px;top:395.00px" width="5.40" height="4.00" viewBox="0 0 5.40 4.00"><path d="M0 0.6H1M2 0.6H5.4M0 2H1M2 2H5.4M0 3.4H1M2 3.4H5.4" stroke="#8e97a4" stroke-width="0.7"/></svg>
<svg style="left:1.40px;top:402.40px" width="4.60" height="5.00" viewBox="0 0 4.60 5.00"><path d="M0.4 0.4L4.2 4.4M4.2 0.4L0.4 4.4" stroke="#c3c8d0" stroke-width="0.9"/></svg>
<svg style="left:1.00px;top:411.00px" width="5.60" height="6.60" viewBox="0 0 5.60 6.60"><path d="M0.6 6L3.6 2.6" stroke="#c3c8d0" stroke-width="1.1"/><path d="M4.4 0.4A1.8 1.8 0 1 0 5.6 3.2" stroke="#c3c8d0" stroke-width="0.9" fill="none"/></svg>
<svg style="left:9.40px;top:391px" width="109.90" height="11"><text x="0" y="8" xml:space="preserve" font-family="'Liberation Mono',monospace" font-size="6.10" fill="#333" textLength="108.90" lengthAdjust="spacingAndGlyphs">Analyzing the selected data...</text></svg>
<svg style="left:9.40px;top:399px" width="106.30" height="11"><text x="0" y="8" xml:space="preserve" font-family="'Liberation Mono',monospace" font-size="6.10" fill="#333" textLength="105.30" lengthAdjust="spacingAndGlyphs">Analyzing internal islands...</text></svg>
<div style="left:8.60px;top:410.40px;width:9.40px;height:8.00px;background:#e3e6ec;"></div>
<svg style="left:19.70px;top:413.80px" width="2.60" height="1.60" viewBox="0 0 2.60 1.60"><path d="M0 0H2.6L1.3 1.6Z" fill="#444"/></svg>
<svg style="left:25.60px;top:409px" width="19.20" height="11"><text x="0" y="8" xml:space="preserve" font-family="'Liberation Mono',monospace" font-size="6.10" fill="#1c1c1c" font-weight="bold" textLength="18.20" lengthAdjust="spacingAndGlyphs">HATCH</text></svg>
<svg style="left:47.40px;top:409px" width="87.00" height="11"><text x="0" y="8" xml:space="preserve" font-family="'Liberation Mono',monospace" font-size="6.10" fill="#333" textLength="86.00" lengthAdjust="spacingAndGlyphs">Pick internal point or [</text></svg>
<div style="left:133.00px;top:410.70px;width:53.20px;height:7.80px;background:#d6d8e1;"></div>
<svg style="left:133.90px;top:409px" width="52.60" height="11"><text x="0" y="8" xml:space="preserve" font-family="'Liberation Mono',monospace" font-size="6.10" fill="#2b2d42" textLength="51.60" lengthAdjust="spacingAndGlyphs">Select objects</text></svg>
<div style="left:187.60px;top:410.70px;width:16.40px;height:7.80px;background:#d6d8e1;"></div>
<svg style="left:188.50px;top:409px" width="15.80" height="11"><text x="0" y="8" xml:space="preserve" font-family="'Liberation Mono',monospace" font-size="6.10" fill="#2b2d42" textLength="14.80" lengthAdjust="spacingAndGlyphs">Draw</text></svg>
<div style="left:206.20px;top:410.70px;width:15.40px;height:7.80px;background:#d6d8e1;"></div>
<svg style="left:207.10px;top:409px" width="14.80" height="11"><text x="0" y="8" xml:space="preserve" font-family="'Liberation Mono',monospace" font-size="6.10" fill="#2b2d42" textLength="13.80" lengthAdjust="spacingAndGlyphs">Undo</text></svg>
<div style="left:223.00px;top:410.70px;width:30.60px;height:7.80px;background:#d6d8e1;"></div>
<svg style="left:223.90px;top:409px" width="30.00" height="11"><text x="0" y="8" xml:space="preserve" font-family="'Liberation Mono',monospace" font-size="6.10" fill="#2b2d42" textLength="29.00" lengthAdjust="spacingAndGlyphs">seTtings</text></svg>
<svg style="left:254.60px;top:409px" width="8.60" height="11"><text x="0" y="8" xml:space="preserve" font-family="'Liberation Mono',monospace" font-size="6.10" fill="#333" textLength="7.60" lengthAdjust="spacingAndGlyphs">]:</text></svg>
<div style="left:3.40px;top:425.50px;width:8.30px;height:0.80px;background:#d3d8df;"></div>
<div style="left:3.40px;top:427.90px;width:8.30px;height:0.80px;background:#d3d8df;"></div>
<div style="left:3.40px;top:430.30px;width:8.30px;height:0.80px;background:#d3d8df;"></div>
<svg style="left:16.00px;top:420.60px" width="36.00" height="14.40" viewBox="0 0 36.00 14.40"><path d="M4.4 0.6H34L31 13.6H1.2Z" fill="#39414f"/></svg>
<svg style="left:24.70px;top:423px" width="18.50" height="11"><text x="0" y="8" xml:space="preserve" font-family="'Liberation Sans',sans-serif" font-size="6.40" fill="#f2f4f6" font-weight="bold" textLength="17.50" lengthAdjust="spacingAndGlyphs">Model</text></svg>
<svg style="left:54.70px;top:423px" width="7.60" height="11"><text x="0" y="8" xml:space="preserve" font-family="'Liberation Sans',sans-serif" font-size="6.20" fill="#aab1bc" textLength="6.60" lengthAdjust="spacingAndGlyphs">A4</text></svg>
<svg style="left:65.00px;top:420.60px" width="7.00" height="14.40" viewBox="0 0 7.00 14.40"><path d="M5.2 1.2L1.8 12.6" stroke="#3a4250" stroke-width="0.8"/></svg>
<svg style="left:75.00px;top:424.40px" width="7.60" height="7.60" viewBox="0 0 7.60 7.60"><path d="M3.8 0V7.6M0 3.8H7.6" stroke="#e8ebef" stroke-width="1.1"/></svg>
<svg style="left:86.00px;top:420.60px" width="7.00" height="14.40" viewBox="0 0 7.00 14.40"><path d="M5.2 1.2L1.8 12.6" stroke="#3a4250" stroke-width="0.8"/></svg>
<div style="left:457.40px;top:422.40px;width:25.00px;height:12.60px;background:#2c3440;"></div>
<svg style="left:459.70px;top:423px" width="21.30" height="11"><text x="0" y="8" xml:space="preserve" font-family="'Liberation Sans',sans-serif" font-size="6.20" fill="#e8ebef" font-weight="bold" textLength="20.30" lengthAdjust="spacingAndGlyphs">MODEL</text></svg>
<svg style="left:485.00px;top:425.20px" width="8.00" height="7.60" viewBox="0 0 8.00 7.60"><path d="M0 0.9H7.8M0 2.9H7.8M0 4.9H7.8M0 6.9H7.8" stroke="#b4bac4" stroke-width="0.9"/><path d="M1.8 0V7.6M3.9 0V7.6M6 0V7.6" stroke="#8e97a4" stroke-width="0.5"/></svg>
<svg style="left:498.00px;top:425.60px" width="6.60" height="6.80" viewBox="0 0 6.60 6.80"><rect x="0.2" y="0.2" width="1" height="1" fill="#aab1bc"/><rect x="0.2" y="2.8000000000000003" width="1" height="1" fill="#aab1bc"/><rect x="0.2" y="5.4" width="1" height="1" fill="#aab1bc"/><rect x="2.8000000000000003" y="0.2" width="1" height="1" fill="#aab1bc"/><rect x="2.8000000000000003" y="2.8000000000000003" width="1" height="1" fill="#aab1bc"/><rect x="2.8000000000000003" y="5.4" width="1" height="1" fill="#aab1bc"/><rect x="5.4" y="0.2" width="1" height="1" fill="#aab1bc"/><rect x="5.4" y="2.8000000000000003" width="1" height="1" fill="#aab1bc"/><rect x="5.4" y="5.4" width="1" height="1" fill="#aab1bc"/></svg>
<svg style="left:509.90px;top:428.10px" width="3.00" height="1.80" viewBox="0 0 3.00 1.80"><path d="M0 0H3L1.5 1.8Z" fill="#c9ced6"/></svg>
<div style="left:516.40px;top:422.00px;width:0.60px;height:13.00px;background:#1a2029;"></div>
<svg style="left:519.50px;top:425.40px" width="8.10" height="7.40" viewBox="0 0 8.10 7.40"><path d="M0.4 0.8L3 3.8" stroke="#e4e7ec" stroke-width="0.9"/><rect x="2.8" y="4.4" width="5" height="2.2" fill="#e4e7ec"/></svg>
<svg style="left:531.00px;top:424.40px" width="8.00" height="9.20" viewBox="0 0 8.00 9.20"><path d="M1.6 0V7.4H8" stroke="#a4acb8" stroke-width="0.8" fill="none"/></svg>
<svg style="left:543.00px;top:425.00px" width="7.60" height="8.00" viewBox="0 0 7.60 8.00"><circle cx="3.7" cy="4" r="3.1" fill="none" stroke="#7d8694" stroke-width="0.8"/><path d="M3.7 4L6 1.6" stroke="#7d8694" stroke-width="0.7"/></svg>
<svg style="left:555.70px;top:428.10px" width="3.00" height="1.80" viewBox="0 0 3.00 1.80"><path d="M0 0H3L1.5 1.8Z" fill="#c9ced6"/></svg>
<svg style="left:565.60px;top:425.00px" width="6.00" height="8.00" viewBox="0 0 6.00 8.00"><path d="M1 1L4.6 6.6M2.6 0.6L3.4 4" stroke="#4a5363" stroke-width="0.7"/></svg>
<svg style="left:576.50px;top:428.10px" width="3.00" height="1.80" viewBox="0 0 3.00 1.80"><path d="M0 0H3L1.5 1.8Z" fill="#c9ced6"/></svg>
<div style="left:583.20px;top:422.90px;width:10.50px;height:11.40px;background:#67a2da;"></div>
<svg style="left:584.60px;top:424.60px" width="8.00" height="8.20" viewBox="0 0 8.00 8.20"><path d="M1.2 7L6.8 1.2" stroke="#eaf2fb" stroke-width="0.9"/><rect x="0.6" y="6.2" width="1.6" height="1.6" fill="#cfe2f6"/></svg>
<svg style="left:596.20px;top:424.20px" width="9.40" height="8.80" viewBox="0 0 9.40 8.80"><rect x="1.6" y="1.6" width="7" height="6.6" fill="none" stroke="#aab1bc" stroke-width="0.8"/><rect x="0.2" y="0.2" width="2.4" height="2.4" fill="#222933" stroke="#aab1bc" stroke-width="0.6"/></svg>
<svg style="left:609.50px;top:428.10px" width="3.00" height="1.80" viewBox="0 0 3.00 1.80"><path d="M0 0H3L1.5 1.8Z" fill="#c9ced6"/></svg>
<svg style="left:617.00px;top:425.20px" width="8.00" height="7.60" viewBox="0 0 8.00 7.60"><path d="M0 0.6H7.8" stroke="#e4e7ec" stroke-width="0.8"/><path d="M0 2.8H5.4" stroke="#e4e7ec" stroke-width="1"/><path d="M0 5H7.8" stroke="#e4e7ec" stroke-width="1.2"/><path d="M0 7H5.4" stroke="#e4e7ec" stroke-width="0.8"/></svg>
<div style="left:628.50px;top:422.90px;width:11.80px;height:11.40px;background:#67a2da;"></div>
<div style="left:641.00px;top:422.90px;width:11.40px;height:11.40px;background:#67a2da;"></div>
<svg style="left:630.80px;top:424.80px" width="7.40" height="8.00" viewBox="0 0 7.40 8.00"><path d="M3.6 0L4.3 3.4L7.2 7.4L4.4 6L3.6 7.8L2.8 6L0 7.4L2.9 3.4Z" fill="#f4f8fc"/></svg>
<svg style="left:643.00px;top:424.80px" width="7.40" height="8.00" viewBox="0 0 7.40 8.00"><path d="M3.6 0L4.3 3.4L7.2 7.4L4.4 6L3.6 7.8L2.8 6L0 7.4L2.9 3.4Z" fill="#f4f8fc"/><path d="M6.4 0.2V2.2M5.4 1.2H7.4" stroke="#f4f8fc" stroke-width="0.5"/></svg>
<svg style="left:655.20px;top:424.80px" width="7.40" height="8.00" viewBox="0 0 7.40 8.00"><path d="M3.6 0L4.3 3.4L7.2 7.4L4.4 6L3.6 7.8L2.8 6L0 7.4L2.9 3.4Z" fill="#e4e7ec"/></svg>
<svg style="left:667.70px;top:423px" width="6.60" height="11"><text x="0" y="8" xml:space="preserve" font-family="'Liberation Sans',sans-serif" font-size="5.40" fill="#c9ced6" textLength="5.60" lengthAdjust="spacingAndGlyphs">1:1</text></svg>
<svg style="left:676.30px;top:428.10px" width="3.00" height="1.80" viewBox="0 0 3.00 1.80"><path d="M0 0H3L1.5 1.8Z" fill="#c9ced6"/></svg>
<svg style="left:685.00px;top:424.60px" width="8.60" height="8.60" viewBox="0 0 8.60 8.60"><rect x="3.55" y="-0.2" width="1.5" height="2" fill="#e4e7ec" transform="rotate(0 4.3 4.3)"/><rect x="3.55" y="-0.2" width="1.5" height="2" fill="#e4e7ec" transform="rotate(45 4.3 4.3)"/><rect x="3.55" y="-0.2" width="1.5" height="2" fill="#e4e7ec" transform="rotate(90 4.3 4.3)"/><rect x="3.55" y="-0.2" width="1.5" height="2" fill="#e4e7ec" transform="rotate(135 4.3 4.3)"/><rect x="3.55" y="-0.2" width="1.5" height="2" fill="#e4e7ec" transform="rotate(180 4.3 4.3)"/><rect x="3.55" y="-0.2" width="1.5" height="2" fill="#e4e7ec" transform="rotate(225 4.3 4.3)"/><rect x="3.55" y="-0.2" width="1.5" height="2" fill="#e4e7ec" transform="rotate(270 4.3 4.3)"/><rect x="3.55" y="-0.2" width="1.5" height="2" fill="#e4e7ec" transform="rotate(315 4.3 4.3)"/><circle cx="4.3" cy="4.3" r="2.3" fill="none" stroke="#e4e7ec" stroke-width="1.5"/></svg>
<svg style="left:697.70px;top:428.10px" width="3.00" height="1.80" viewBox="0 0 3.00 1.80"><path d="M0 0H3L1.5 1.8Z" fill="#c9ced6"/></svg>
<svg style="left:705.60px;top:425.00px" width="7.80" height="7.80" viewBox="0 0 7.80 7.80"><path d="M3.9 0V7.8M0 3.9H7.8" stroke="#eef0f3" stroke-width="1"/></svg>
<svg style="left:718.80px;top:424.40px" width="8.20" height="9.00" viewBox="0 0 8.20 9.00"><rect x="0.6" y="0.6" width="2.6" height="2.6" fill="none" stroke="#6d7684" stroke-width="0.6"/><circle cx="6" cy="3" r="1.5" fill="none" stroke="#6d7684" stroke-width="0.6"/><path d="M3 5.4L4.6 8.2H1.4Z" fill="none" stroke="#6d7684" stroke-width="0.6"/></svg>
<svg style="left:733.60px;top:424.60px" width="8.40" height="8.40" viewBox="0 0 8.40 8.40"><path d="M1 3.6L3.2 0.6L5 3.6Z" fill="#4d8fe0"/><path d="M4.4 3L6.2 0.8L8 3Z" fill="#4d8fe0"/><rect x="0.8" y="4" width="5.2" height="3" fill="#d6b84a"/><path d="M5.6 4.4L8 7.4H4Z" fill="#4d8fe0"/></svg>
<div style="left:744.60px;top:422.00px;width:0.60px;height:13.00px;background:#1a2029;"></div>
<svg style="left:748.30px;top:425.00px" width="9.30" height="7.80" viewBox="0 0 9.30 7.80"><rect x="0.4" y="0.4" width="8.4" height="6.8" fill="none" stroke="#e4e7ec" stroke-width="0.8"/><path d="M1.6 3.4V1.6H3.6M7.6 4.2V6H5.6" stroke="#e4e7ec" stroke-width="0.8" fill="none"/></svg>
<div style="left:761.40px;top:425.30px;width:6.60px;height:1.00px;background:#e4e7ec;"></div>
<div style="left:761.40px;top:428.30px;width:6.60px;height:1.00px;background:#e4e7ec;"></div>
<div style="left:761.40px;top:431.30px;width:6.60px;height:1.00px;background:#e4e7ec;"></div>
</div></div></div></body></html>
